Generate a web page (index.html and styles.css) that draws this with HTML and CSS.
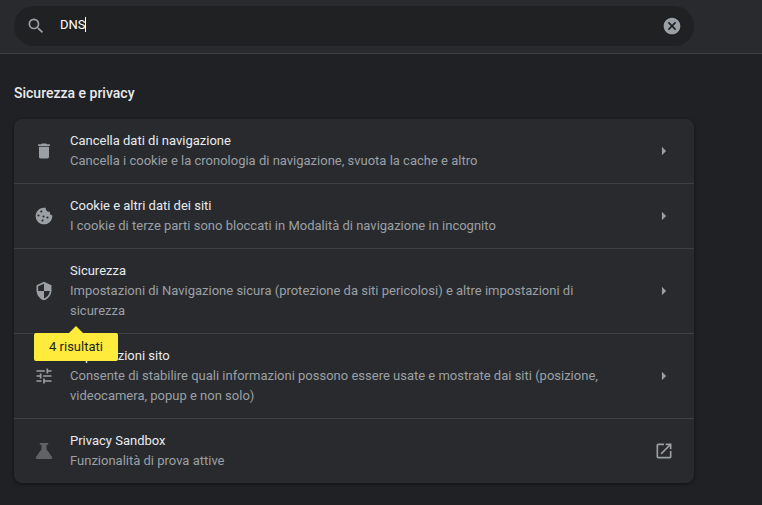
FILE: index.html
```html
<!DOCTYPE html>
<html lang="it">
<head>
    <meta charset="UTF-8">
    <meta name="viewport" content="width=device-width, initial-scale=1.0">
    <title>Impostazioni</title>
    <link rel="stylesheet" href="styles.css">
</head>
<body>
    <header class="toolbar">
        <form class="search" role="search">
            <svg class="icon" viewBox="0 0 24 24" aria-hidden="true"><path d="M15.5 14h-.79l-.28-.27A6.471 6.471 0 0 0 16 9.5 6.5 6.5 0 1 0 9.5 16c1.61 0 3.09-.59 4.23-1.57l.27.28v.79l5 4.99L20.49 19l-4.99-5zm-6 0C7.01 14 5 11.99 5 9.5S7.01 5 9.5 5 14 7.01 14 9.5 11.99 14 9.5 14z"/></svg>
            <input class="search-input" type="text" value="DNS" aria-label="Cerca nelle impostazioni">
            <span class="caret"></span>
            <button class="icon-button" type="button" aria-label="Cancella ricerca">
                <svg class="icon" viewBox="0 0 24 24" aria-hidden="true"><path d="M12 2C6.47 2 2 6.47 2 12s4.47 10 10 10 10-4.47 10-10S17.53 2 12 2zm5 13.59L15.59 17 12 13.41 8.41 17 7 15.59 10.59 12 7 8.41 8.41 7 12 10.59 15.59 7 17 8.41 13.41 12 17 15.59z"/></svg>
            </button>
        </form>
    </header>

    <main class="content">
        <h2 class="section-title">Sicurezza e privacy</h2>
        <ul class="card">
            <li class="row">
                <svg class="icon" viewBox="0 0 24 24" aria-hidden="true"><path d="M6 19c0 1.1.9 2 2 2h8c1.1 0 2-.9 2-2V7H6v12zM19 4h-3.5l-1-1h-5l-1 1H5v2h14V4z"/></svg>
                <div class="text">
                    <div class="label" id="clear-data">Cancella dati di navigazione</div>
                    <div class="sub-label">Cancella i cookie e la cronologia di navigazione, svuota la cache e altro</div>
                </div>
                <button class="icon-button" type="button" aria-labelledby="clear-data">
                    <svg class="icon" viewBox="0 0 24 24" aria-hidden="true"><path d="M9.5 7l5 5-5 5z"/></svg>
                </button>
            </li>
            <li class="row">
                <svg class="icon" viewBox="0 0 24 24" aria-hidden="true">
                    <path d="M21.95 10.99c-1.79-.03-3.7-1.95-2.68-4.22-2.98 1-5.77-1.59-5.19-4.56C6.95.71 2 6.58 2 12c0 5.52 4.48 10 10 10 5.89 0 10.54-5.08 9.95-11.01z"/>
                    <g class="chips">
                        <circle cx="8.8" cy="6.6" r="1.3"/>
                        <circle cx="5.4" cy="11.4" r="1.3"/>
                        <circle cx="11.4" cy="12.6" r="1.3"/>
                        <circle cx="16.2" cy="13.800" r="1.3"/>
                        <circle cx="10.2" cy="17.4" r="1.3"/>
                    </g>
                </svg>
                <div class="text">
                    <div class="label" id="cookies">Cookie e altri dati dei siti</div>
                    <div class="sub-label">I cookie di terze parti sono bloccati in Modalità di navigazione in incognito</div>
                </div>
                <button class="icon-button" type="button" aria-labelledby="cookies">
                    <svg class="icon" viewBox="0 0 24 24" aria-hidden="true"><path d="M9.5 7l5 5-5 5z"/></svg>
                </button>
            </li>
            <li class="row">
                <svg class="icon" viewBox="0 0 24 24" aria-hidden="true"><path d="M12 1L3 5v6c0 5.55 3.84 10.74 9 12 5.16-1.26 9-6.45 9-12V5l-9-4zm0 10.99h7c-.53 4.12-3.28 7.79-7 8.94V12H5V6.3l7-3.11v8.8z"/></svg>
                <div class="text">
                    <div class="label" id="security">Sicurezza</div>
                    <div class="sub-label">Impostazioni di Navigazione sicura (protezione da siti pericolosi) e altre impostazioni di sicurezza</div>
                </div>
                <button class="icon-button" type="button" aria-labelledby="security">
                    <svg class="icon" viewBox="0 0 24 24" aria-hidden="true"><path d="M9.5 7l5 5-5 5z"/></svg>
                </button>
                <div class="bubble">4 risultati</div>
            </li>
            <li class="row">
                <svg class="icon" viewBox="0 0 24 24" aria-hidden="true"><path d="M3 17v2h6v-2H3zM3 5v2h10V5H3zm10 16v-2h8v-2h-8v-2h-2v6h2zM7 9v2H3v2h4v2h2V9H7zm14 4v-2H11v2h10zm-6-4h2V7h4V5h-4V3h-2v6z"/></svg>
                <div class="text">
                    <div class="label" id="site-settings">Impostazioni sito</div>
                    <div class="sub-label">Consente di stabilire quali informazioni possono essere usate e mostrate dai siti (posizione, videocamera, popup e non solo)</div>
                </div>
                <button class="icon-button" type="button" aria-labelledby="site-settings">
                    <svg class="icon" viewBox="0 0 24 24" aria-hidden="true"><path d="M9.5 7l5 5-5 5z"/></svg>
                </button>
            </li>
            <li class="row">
                <svg class="icon icon-dim" viewBox="0 0 24 24" aria-hidden="true"><path d="M7 2.500h10v2h-2v5.500l6.600 9.200c.8 1.100.1 2.300-1.100 2.300h-17c-1.200 0-1.900-1.200-1.100-2.300L9 10V4.500H7z"/></svg>
                <div class="text">
                    <div class="label" id="sandbox">Privacy Sandbox</div>
                    <div class="sub-label">Funzionalità di prova attive</div>
                </div>
                <a class="icon-button" href="#" aria-labelledby="sandbox">
                    <svg class="icon" viewBox="0 0 24 24" aria-hidden="true"><path d="M19 19H5V5h7V3H5a2 2 0 0 0-2 2v14a2 2 0 0 0 2 2h14c1.100 0 2-.9 2-2v-7h-2v7zM14 3v2h3.590l-9.830 9.830 1.410 1.410L19 6.410V10h2V3h-7z"/></svg>
                </a>
            </li>
        </ul>
    </main>
</body>
</html>
```

FILE: styles.css
```css
* {
    box-sizing: border-box;
}
body {
    margin: 0;
    background: #202124;
    color: #e8eaed;
    font-family: Roboto, "Liberation Sans", sans-serif;
    font-size: 13px;
    line-height: 20px;
}
.toolbar {
    padding: 6px 14px 7px;
    background: #292a2d;
    border-bottom: 1px solid #3f4043;
}
.search {
    position: relative;
    display: flex;
    align-items: center;
    max-width: 680px;
    height: 40px;
    padding: 0 12px;
    border-radius: 20px;
    background: #202123;
}
.search-input {
    flex: 1;
    min-width: 0;
    margin-left: 14px;
    padding: 0 0 3px;
    border: 0;
    outline: 0;
    background: none;
    color: #fff;
    font: inherit;
}
.caret {
    position: absolute;
    top: 11px;
    left: 71px;
    width: 1px;
    height: 15px;
    background: #fff;
}
.icon {
    display: block;
    flex: none;
    width: 20px;
    height: 20px;
    fill: #9aa0a6;
}
.icon-dim {
    fill: #5f6368;
}
.chips {
    fill: #292a2d;
}
.icon-button {
    flex: none;
    padding: 0;
    border: 0;
    background: none;
    cursor: pointer;
}
.content {
    padding: 29px 14px 20px;
}
.section-title {
    margin: 0 0 16px;
    font-size: 14px;
    font-weight: 500;
}
.card {
    max-width: 680px;
    margin: 0;
    padding: 0;
    list-style: none;
    background: #292a2d;
    border-radius: 8px;
    box-shadow: 0 1px 3px 1px rgba(0, 0, 0, 0.3);
}
.row {
    position: relative;
    display: flex;
    align-items: center;
    padding: 12px 20px;
    border-bottom: 1px solid #3f4043;
}
.row:last-child {
    border-bottom: 0;
}
.text {
    flex: 1;
    min-width: 0;
    margin: 0 32px 0 16px;
}
.sub-label {
    color: #9aa0a6;
}

/* search result bubble hanging under a row */
.bubble {
    position: absolute;
    top: 100%;
    left: 20px;
    z-index: 1;
    min-width: 84px;
    padding: 4px 12px;
    border-radius: 2px;
    background: #ffeb3b;
    color: #202124;
    text-align: center;
}
.bubble::before {
    content: "";
    position: absolute;
    bottom: 100%;
    left: 50%;
    margin-left: -7px;
    border: 7px solid transparent;
    border-top: 0;
    border-bottom-color: #ffeb3b;
}
```
